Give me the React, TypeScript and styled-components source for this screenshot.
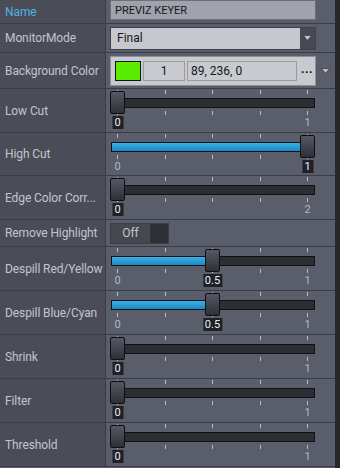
import React from "react";
import styled, { createGlobalStyle } from "styled-components";

const GlobalStyle = createGlobalStyle`
  body {
    margin: 0;
    background: #27282d;
    font-family: Roboto, "Liberation Sans", sans-serif;
  }
`;

const Frame = styled.div`
  display: flex;
  width: 340px;
  height: 468px;
  overflow: hidden;
  background: #27282d;
`;

const Panel = styled.div`
  width: 335px;
  background: #5a5d6a;
`;

const Edge = styled.div`
  flex: 1;
  background: #26272c;
`;

const Row = styled.div<{ $h: number }>`
  display: flex;
  height: ${(p) => p.$h}px;
  box-sizing: border-box;
  border-bottom: 1px solid #3a3d46;
`;

const Label = styled.div<{ $active?: boolean }>`
  width: 106px;
  flex: none;
  box-sizing: border-box;
  display: flex;
  align-items: center;
  padding-left: 5px;
  background: #4a4d58;
  border-right: 1px solid #3a3d46;
  color: ${(p) => (p.$active ? "#4fb2e2" : "#c2c5cc")};
  font-size: 12px;
  letter-spacing: -0.1px;
  white-space: nowrap;
`;

const Cell = styled.div`
  flex: 1;
  display: flex;
  align-items: center;
  padding-left: 4px;
`;

const TextField = styled.div`
  width: 206px;
  height: 20px;
  margin-top: -3px;
  box-sizing: border-box;
  background: #a0a2ac;
  border: 1px solid #6c6f79;
  color: #15161a;
  font-size: 11px;
  padding-left: 4px;
  display: flex;
  align-items: center;
`;

const Select = styled.div`
  width: 206px;
  height: 23px;
  box-sizing: border-box;
  display: flex;
  border: 1px solid #3f424a;
`;

const SelectValue = styled.div`
  flex: 1;
  background: #c6c8ce;
  color: #15161a;
  font-size: 12px;
  padding-left: 6px;
  display: flex;
  align-items: center;
`;

const SelectButton = styled.div`
  width: 15px;
  background: #474a53;
  display: flex;
  align-items: center;
  justify-content: center;
`;

const ColorBox = styled.div`
  width: 206px;
  height: 30px;
  box-sizing: border-box;
  background: #c8cacf;
  border: 1px solid #8d8f97;
  display: flex;
  align-items: center;
  padding-left: 4px;
  gap: 2px;
`;

const Swatch = styled.div<{ $color: string }>`
  width: 26px;
  height: 20px;
  box-sizing: border-box;
  border: 1px solid #111;
  background: ${(p) => p.$color};
`;

const NumField = styled.div<{ $w: number; $center?: boolean }>`
  width: ${(p) => p.$w}px;
  height: 20px;
  box-sizing: border-box;
  border: 1px solid #9a9ca4;
  color: #15161a;
  font-size: 12px;
  display: flex;
  align-items: center;
  justify-content: ${(p) => (p.$center ? "center" : "flex-start")};
  padding-left: ${(p) => (p.$center ? 0 : 3)}px;
`;

const Dots = styled.div`
  flex: 1;
  text-align: center;
  color: #111;
  font-weight: bold;
  font-size: 12px;
  letter-spacing: 0.5px;
  margin-top: -4px;
`;

const ArrowSlot = styled.div`
  width: 19px;
  display: flex;
  justify-content: center;
`;

const Toggle = styled.div`
  width: 59px;
  height: 21px;
  box-sizing: border-box;
  border: 1px solid #3b3e46;
  background: #2f3036;
  display: flex;
`;

const ToggleKnob = styled.div`
  width: 39px;
  background: #45484f;
  color: #c2c5cc;
  font-size: 12px;
  display: flex;
  align-items: center;
  justify-content: center;
`;

const SliderBox = styled.div`
  position: relative;
  width: 206px;
  height: 100%;
`;

const Tick = styled.div<{ $top: number }>`
  position: absolute;
  top: ${(p) => p.$top}px;
  width: 1px;
  height: 4px;
  background: #b9bbc3;
`;

const Track = styled.div`
  position: absolute;
  top: 9px;
  left: 1px;
  width: 204px;
  height: 10px;
  box-sizing: border-box;
  background: #2c2e34;
  border: 1px solid #101114;
  overflow: hidden;
`;

const Fill = styled.div`
  height: 100%;
  background: linear-gradient(#3ab2ea, #1a88c2);
`;

const Thumb = styled.div`
  position: absolute;
  top: 2px;
  width: 15px;
  height: 23px;
  box-sizing: border-box;
  border: 1px solid #0e0f12;
  border-radius: 2px;
  background: linear-gradient(#565963, #2e3036);
`;

const EndLabel = styled.div`
  position: absolute;
  top: 27px;
  height: 13px;
  line-height: 13px;
  transform: translateX(-50%);
  color: #b5b8c0;
  font-size: 11px;
`;

const ValueBox = styled(EndLabel)`
  background: #202126;
  color: #eceef4;
  padding: 0 2px;
  min-width: 7px;
  text-align: center;
`;

const Arrow: React.FC<{ color: string }> = ({ color }) => (
  <svg width="9" height="6" viewBox="0 0 9 6">
    <path d="M0.5 0.5 L8.5 0.5 L4.5 5.5 Z" fill={color} stroke="#2a2c31" strokeWidth="0.6" />
  </svg>
);

const Slider: React.FC<{ value: number; min: number; max: number }> = ({ value, min, max }) => {
  const t = (value - min) / (max - min);
  const thumbLeft = t * 190;
  const center = thumbLeft + 7.5;
  const ticks = [0, 0.25, 0.5, 0.75, 1].map((k) => 7 + k * 190);
  return (
    <SliderBox>
      {ticks.map((x) => (
        <React.Fragment key={x}>
          <Tick $top={1} style={{ left: x }} />
          <Tick $top={22} style={{ left: x }} />
        </React.Fragment>
      ))}
      <Track>
        <Fill style={{ width: Math.max(0, center - 1) }} />
      </Track>
      <Thumb style={{ left: thumbLeft }} />
      {t > 0 && <EndLabel style={{ left: 7.5 }}>{min}</EndLabel>}
      {t < 1 && <EndLabel style={{ left: 197.5 }}>{max}</EndLabel>}
      <ValueBox style={{ left: center }}>{value}</ValueBox>
    </SliderBox>
  );
};

const sliders = [
  { label: "Low Cut", value: 0, max: 1, h: 44 },
  { label: "High Cut", value: 1, max: 1, h: 43 },
  { label: "Edge Color Corr...", value: 0, max: 2, h: 44 },
];

const sliders2 = [
  { label: "Despill Red/Yellow", value: 0.5, max: 1, h: 44 },
  { label: "Despill Blue/Cyan", value: 0.5, max: 1, h: 44 },
  { label: "Shrink", value: 0, max: 1, h: 44 },
  { label: "Filter", value: 0, max: 1, h: 44 },
  { label: "Threshold", value: 0, max: 1, h: 44 },
];

const App: React.FC = () => (
  <>
    <GlobalStyle />
    <Frame>
      <Panel>
        <Row $h={24}>
          <Label $active>Name</Label>
          <Cell>
            <TextField>PREVIZ KEYER</TextField>
          </Cell>
        </Row>
        <Row $h={29}>
          <Label>MonitorMode</Label>
          <Cell>
            <Select>
              <SelectValue>Final</SelectValue>
              <SelectButton>
                <Arrow color="#c3c5cb" />
              </SelectButton>
            </Select>
          </Cell>
        </Row>
        <Row $h={36}>
          <Label>Background Color</Label>
          <Cell>
            <ColorBox>
              <Swatch $color="#59ec00" />
              <NumField $w={42} $center>
                1
              </NumField>
              <NumField $w={110}>89, 236, 0</NumField>
              <Dots>...</Dots>
            </ColorBox>
            <ArrowSlot>
              <Arrow color="#b9bbc3" />
            </ArrowSlot>
          </Cell>
        </Row>
        {sliders.map((s) => (
          <Row $h={s.h} key={s.label}>
            <Label>{s.label}</Label>
            <Cell>
              <Slider value={s.value} min={0} max={s.max} />
            </Cell>
          </Row>
        ))}
        <Row $h={27}>
          <Label>Remove Highlight</Label>
          <Cell>
            <Toggle>
              <ToggleKnob>Off</ToggleKnob>
            </Toggle>
          </Cell>
        </Row>
        {sliders2.map((s) => (
          <Row $h={s.h} key={s.label}>
            <Label>{s.label}</Label>
            <Cell>
              <Slider value={s.value} min={0} max={s.max} />
            </Cell>
          </Row>
        ))}
      </Panel>
      <Edge />
    </Frame>
  </>
);

export default App;
